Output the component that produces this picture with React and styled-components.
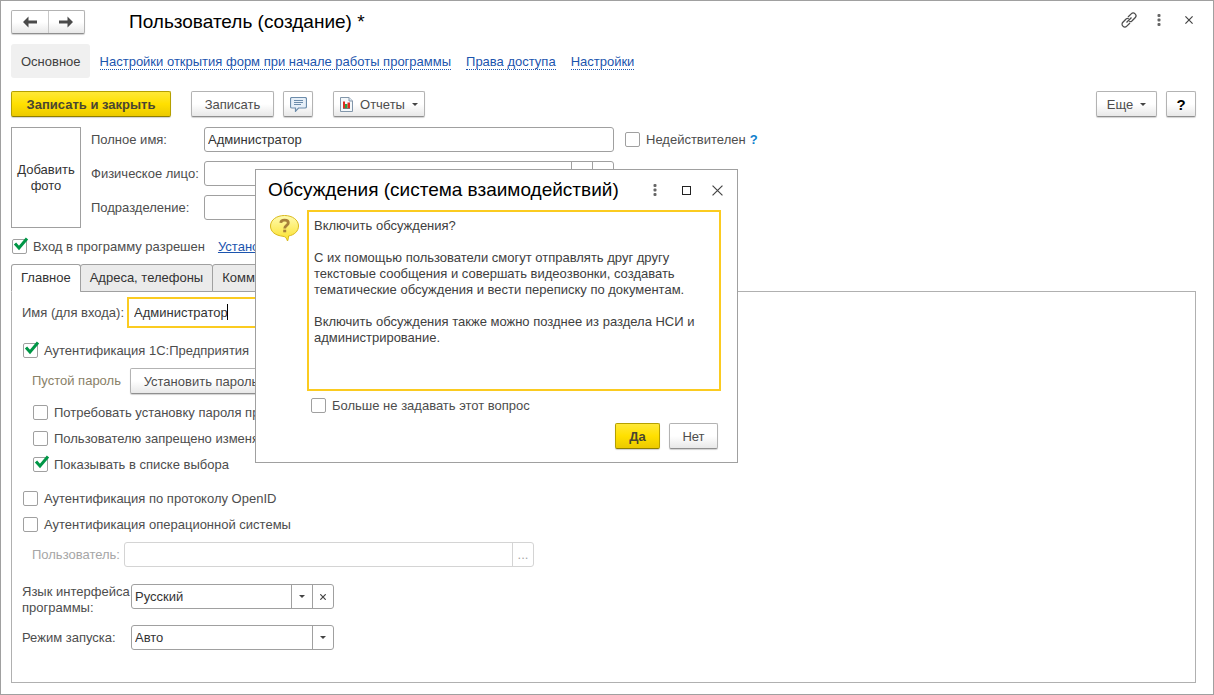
import React from "react";
import styled, { createGlobalStyle, css } from "styled-components";

const GlobalStyle = createGlobalStyle`
  *, *::before, *::after { box-sizing: border-box; }
  body {
    margin: 0;
    background: #fff;
    color: #4d4d4d;
    font: 13px/16px "Liberation Sans", Arial, sans-serif;
  }
  button, input, select, textarea { font: inherit; color: inherit; margin: 0; }
  svg { display: block; flex: none; }
`;

const Window = styled.main`
  position: relative;
  display: flex;
  flex-direction: column;
  min-height: 100vh;
  padding: 8px 17px 11px 10px;
  border: 1px solid #a0a0a0;
`;

const TitleBar = styled.header`
  display: flex;
  align-items: center;
  height: 25px;
`;

const buttonFace = css`
  border: 1px solid #b3b3b3;
  border-bottom-color: #8f8f8f;
  border-radius: 2px;
  background: linear-gradient(#fff 0%, #fff 50%, #e8e8e8 100%);
  box-shadow: 0 1px 1px rgba(0, 0, 0, 0.18);
`;

const HistoryButtons = styled.div`
  ${buttonFace}
  display: flex;
  width: 74px;
  height: 24px;
`;

const HistoryButton = styled.button`
  display: flex;
  flex: 1;
  align-items: center;
  justify-content: center;
  padding: 0;
  border: 0;
  background: none;
  & + & { border-left: 1px solid #c8c8c8; }
`;

const Title = styled.h1`
  flex: 1;
  margin: 0 0 0 44px;
  color: #000;
  font-size: 19px;
  line-height: 24px;
  font-weight: 400;
`;

const WindowTools = styled.div`
  display: flex;
  gap: ${(p) => p.$gap || 10}px;
`;

const ToolButton = styled.button`
  display: flex;
  align-items: center;
  justify-content: center;
  width: 20px;
  height: 20px;
  padding: 0;
  border: 0;
  background: none;
`;

const TitleTools = styled(WindowTools)`
  margin: 0 -3px 3px 0;
`;

const SectionNav = styled.nav`
  display: flex;
  align-items: center;
  gap: 15px;
  height: 34px;
  margin-top: 10px;
`;

const CurrentSection = styled.span`
  margin-right: -5px;
  padding: 10px 9px 8px 10px;
  border-radius: 3px;
  background: #f0f0f0;
  color: #404040;
`;

const SectionLink = styled.a`
  margin-top: 2px;
  border-bottom: 1px dotted #1c55ae;
  color: #1c55ae;
  line-height: 14px;
  text-decoration: none;
`;

const CommandBar = styled.div`
  display: flex;
  height: 27px;
  margin: 13px 0 9px;
  gap: 9px;
`;

const Button = styled.button`
  ${buttonFace}
  display: flex;
  align-items: center;
  justify-content: center;
  gap: 7px;
  width: ${(p) => p.$width}px;
  height: 26px;
  padding: 1px 0 0;
  white-space: nowrap;
  color: ${(p) => (p.$help ? "#000" : "#4d4d4d")};
  font-size: ${(p) => (p.$help ? 15 : 13)}px;
  font-weight: ${(p) => (p.$help ? 700 : 400)};
  ${(p) =>
    p.$primary &&
    css`
      border-color: #b5a000;
      border-bottom-color: #8f7f00;
      background: linear-gradient(#ffe838 0%, #ffe000 50%, #ecca00 100%);
      color: #4a4632;
      font-weight: 700;
    `}
`;

const Spread = styled.div`
  flex: ${(p) => (p.$grow ? 1 : "none")};
  width: ${(p) => (p.$grow ? "auto" : "2px")};
`;

const PersonBlock = styled.section`
  display: flex;
  gap: 10px;
`;

const PhotoButton = styled.button`
  width: 70px;
  height: 101px;
  padding: 0;
  border: 1px solid #a0a0a0;
  background: #fff;
  color: #333;
`;

const PersonFields = styled.div`
  display: flex;
  flex-direction: column;
  gap: 9px;
`;

const FieldRow = styled.div`
  display: flex;
  align-items: ${(p) => (p.$top ? "flex-start" : "center")};
  padding-left: ${(p) => (p.$indent ? 10 : 0)}px;
`;

const FieldLabel = styled.label`
  flex: none;
  width: ${(p) => p.$width}px;
  white-space: ${(p) => (p.$wrap ? "normal" : "nowrap")};
  color: ${(p) => (p.$muted ? "#a6a6a6" : "#4d4d4d")};
`;

const Field = styled.div`
  display: flex;
  width: ${(p) => p.$width}px;
  height: 25px;
  border: 1px solid ${(p) => (p.$muted ? "#d4d4d4" : "#a0a0a0")};
  border-radius: 3px;
  background: #fff;
`;

const inputFace = css`
  flex: 1;
  min-width: 0;
  padding: 0 3px;
  border: 0;
  outline: 0;
  background: none;
  color: #333;
  appearance: none;
`;

const Input = styled.input`
  ${inputFace}
`;

const Select = styled.select`
  ${inputFace}
`;

const FieldButton = styled.button`
  display: flex;
  align-items: center;
  justify-content: center;
  width: 21px;
  padding: 0;
  border: 0;
  border-left: 1px solid ${(p) => (p.$muted ? "#d4d4d4" : "#a0a0a0")};
  background: none;
  color: ${(p) => (p.$muted ? "#a6a6a6" : "#4d4d4d")};
`;

const FocusedField = styled.div`
  position: relative;
  display: flex;
  width: 210px;
  height: 31px;
  border: 2px solid #fbcb20;
  background: #fff;
  ${Input} { padding: 0 5px; }
`;

const TextCursor = styled.span`
  position: absolute;
  top: 5px;
  left: 98px;
  width: 1px;
  height: 16px;
  background: #000;
`;

const CheckLabel = styled.label`
  display: flex;
  align-items: center;
  gap: 6px;
  height: 16px;
  white-space: nowrap;
`;

const CheckBox = styled.span`
  position: relative;
  flex: none;
  width: 15px;
  height: 16px;
  input {
    display: block;
    width: 15px;
    height: 15px;
    margin: 0;
    border: 1px solid #a0a0a0;
    border-radius: 2px;
    background: #fff;
    appearance: none;
  }
  svg {
    position: absolute;
    top: -2px;
    left: 1px;
    pointer-events: none;
  }
`;

const Hint = styled.button`
  margin-left: 4px;
  padding: 0;
  border: 0;
  background: none;
  color: #0f80cc;
  font-weight: 700;
`;

const InvalidOption = styled.div`
  display: flex;
  align-items: center;
  height: 25px;
  margin-left: 1px;
`;

const AccessRow = styled.div`
  display: flex;
  align-items: center;
  gap: 13px;
  height: 16px;
  margin: 11px 0 9px 1px;
`;

const AccessLink = styled.a`
  color: #1c55ae;
`;

const Tabs = styled.div`
  display: flex;
  height: 28px;
  margin-bottom: -1px;
`;

const Tab = styled.button`
  position: relative;
  padding: 0 9px;
  border: 1px solid #a0a0a0;
  border-bottom-color: ${(p) => (p.$active ? "#fff" : "#a0a0a0")};
  border-radius: 3px 3px 0 0;
  background: ${(p) => (p.$active ? "#fff" : "#ebebeb")};
  color: #333;
  & + & { margin-left: -1px; }
`;

const TabPanel = styled.section`
  display: flex;
  flex: 1;
  flex-direction: column;
  align-items: flex-start;
  padding: 5px 10px 32px;
  border: 1px solid #b0b0b0;
`;

const Group = styled.div`
  display: flex;
  flex-direction: column;
  align-items: flex-start;
  gap: ${(p) => p.$gap || 10}px;
  margin-top: ${(p) => p.$top}px;
  padding-left: ${(p) => p.$left || 0}px;
`;

const Note = styled.span`
  width: 98px;
  color: #8a8168;
`;

const Dialog = styled.div`
  position: absolute;
  top: 168px;
  left: 254px;
  width: 483px;
  padding: 8px 16px 13px 12px;
  border: 1px solid #a0a0a0;
  background: #fff;
`;

const DialogHeader = styled.div`
  display: flex;
  align-items: center;
  height: 24px;
  margin-right: -6px;
`;

const DialogTitle = styled.h2`
  flex: 1;
  margin: 0;
  color: #000;
  font-size: 19px;
  line-height: 24px;
  font-weight: 400;
  white-space: nowrap;
`;

const DialogBody = styled.div`
  display: flex;
  align-items: flex-start;
  gap: 7px;
  margin-top: 8px;
`;

const QuestionIcon = styled.svg`
  margin-top: 4px;
`;

const Message = styled.div`
  flex: 1;
  height: 181px;
  padding: 6px 5px;
  border: 2px solid #fbcb20;
  color: #404040;
  p { margin: 0 0 16px; }
`;

const DialogOption = styled.div`
  margin: 7px 0 0 43px;
`;

const DialogActions = styled.div`
  display: flex;
  justify-content: flex-end;
  gap: 9px;
  margin: 9px 3px 0 0;
`;

function Arrow({ back }) {
  return (
    <svg width="16" height="12" viewBox="0 0 16 12">
      <path
        d={back ? "M1 6 6.5 .5V4.500H15V7.500H6.500V11.500Z" : "M15 6 9.500 .5V4.500H1V7.500H9.500V11.500Z"}
        fill="#4a4a4a"
      />
    </svg>
  );
}

const LinkIcon = () => (
  <svg width="16" height="16" viewBox="0 0 16 16" fill="none" stroke="#4d4d4d" strokeWidth="1.300">
    <path d="M7 5 10.200 1.900C11.300.8 13 .8 14.100 1.900S15.200 4.700 14.100 5.800L10.900 9" />
    <path d="M9 11 5.800 14.100C4.700 15.200 3 15.200 1.900 14.100S.8 11.300 1.900 10.200L5.100 7" />
    <path d="M5.500 10.500 10.500 5.500M5.100 7C6 6.200 7 6.200 7.700 6.700M10.900 9C10 9.800 9 9.800 8.300 9.300" />
  </svg>
);

const DotsIcon = () => (
  <svg width="4" height="12" viewBox="0 0 4 12" fill="#666">
    <rect x="0.500" y="0" width="3" height="3" rx="1" />
    <rect x="0.500" y="4.500" width="3" height="3" rx="1" />
    <rect x="0.500" y="9" width="3" height="3" rx="1" />
  </svg>
);

const CrossIcon = ({ size, width = 1.2 }) => (
  <svg width={size} height={size} viewBox="0 0 10 10" stroke="#444" strokeWidth={(width * 10) / size}>
    <path d="M.5.5 9.500 9.500M9.500.5.5 9.500" />
  </svg>
);

const MaximizeIcon = () => (
  <svg width="9" height="9" viewBox="0 0 9 9">
    <rect x=".5" y=".5" width="8" height="8" fill="none" stroke="#222" />
  </svg>
);

const CaretIcon = () => (
  <svg width="6" height="3" viewBox="0 0 6 3">
    <path d="M0 0H6L3 3Z" fill="#444" />
  </svg>
);

const CommentIcon = () => (
  <svg width="17" height="15" viewBox="0 0 17 15" fill="none" stroke="#6c8cab">
    <path
      d="M2 .5H15Q16.500.5 16.500 2V9.500Q16.500 11 15 11H8.500L5.500 14.300V11H2Q.5 11 .5 9.500V2Q.5.5 2 .5Z"
      fill="#e6eff8"
      strokeWidth="1.200"
    />
    <path d="M4 3.500H13M4 5.500H13M4 7.500H11" />
  </svg>
);

const ReportIcon = () => (
  <svg width="13" height="15" viewBox="0 0 13 15">
    <path d="M.5.5H9L12.500 4V14.500H.5Z" fill="#f4f8fb" stroke="#8296aa" />
    <path d="M9 .5V4H12.500" fill="#dfe7ef" stroke="#8296aa" />
    <path d="M3 4.500H5V11H3Z" fill="#e02b20" />
    <path d="M5 7H7.500V11H5Z" fill="#2aa044" />
    <path d="M7.500 5.500H10V11H7.500Z" fill="#e02b20" />
    <path d="M3 11.500H10" stroke="#777" />
  </svg>
);

const TickIcon = () => (
  <svg width="16" height="14" viewBox="0 0 16 14" fill="none" stroke="#009646" strokeWidth="3">
    <path d="M2 6.500 6 11 14 1.500" />
  </svg>
);

function Check({ label, checked }) {
  return (
    <CheckLabel>
      <CheckBox>
        <input type="checkbox" defaultChecked={checked} />
        {checked && <TickIcon />}
      </CheckBox>
      {label}
    </CheckLabel>
  );
}

function TextField({ id, label, labelWidth, width, value, buttons = 0 }) {
  return (
    <FieldRow>
      <FieldLabel htmlFor={id} $width={labelWidth}>{label}</FieldLabel>
      <Field $width={width}>
        <Input id={id} defaultValue={value} />
        {buttons > 0 && <FieldButton aria-label="Выбрать"><CaretIcon /></FieldButton>}
        {buttons > 1 && <FieldButton aria-label="Открыть"><MaximizeIcon /></FieldButton>}
      </Field>
    </FieldRow>
  );
}

function SelectField({ id, label, value, clearable, top }) {
  return (
    <FieldRow $top={top}>
      <FieldLabel htmlFor={id} $width={109} $wrap>{label}</FieldLabel>
      <Field $width={203}>
        <Select id={id} defaultValue={value}>
          <option>{value}</option>
        </Select>
        <FieldButton aria-label="Раскрыть список"><CaretIcon /></FieldButton>
        {clearable && <FieldButton aria-label="Очистить"><CrossIcon size={6} /></FieldButton>}
      </Field>
    </FieldRow>
  );
}

function DiscussionsDialog() {
  return (
    <Dialog role="dialog" aria-labelledby="dialog-title">
      <DialogHeader>
        <DialogTitle id="dialog-title">Обсуждения (система взаимодействий)</DialogTitle>
        <WindowTools $gap={11}>
          <ToolButton aria-label="Меню"><DotsIcon /></ToolButton>
          <ToolButton aria-label="Развернуть"><MaximizeIcon /></ToolButton>
          <ToolButton aria-label="Закрыть"><CrossIcon size={11} /></ToolButton>
        </WindowTools>
      </DialogHeader>
      <DialogBody>
        <QuestionIcon width="32" height="30" viewBox="0 0 32 30">
          <defs>
            <linearGradient id="bubble" x1="0" y1="0" x2="0" y2="1">
              <stop offset="0" stopColor="#fffbb0" />
              <stop offset="1" stopColor="#fbe02a" />
            </linearGradient>
          </defs>
          <path
            d="M16.500 1.500C8.500 1.500 2.500 6 2.500 12s5 9.500 12.500 10.300C17.500 22.600 18.500 24 19.500 27 20.500 25 20.500 23.500 20.500 22 26.500 21 30.500 17 30.500 12 30.500 6 24.500 1.500 16.500 1.500Z"
            fill="url(#bubble)"
            stroke="#d9b91c"
          />
          <path
            d="M12.800 8.800C13 5.300 20.300 5.300 20.300 8.900 20.300 11.500 16.700 11.300 16.700 14.500"
            fill="none"
            stroke="#a8813a"
            strokeWidth="2.800"
          />
          <rect x="15.200" y="15.700" width="3" height="2.600" fill="#a8813a" />
        </QuestionIcon>
        <Message>
          <p>Включить обсуждения?</p>
          <p>
            С их помощью пользователи смогут отправлять друг другу текстовые сообщения и
            совершать видеозвонки, создавать тематические обсуждения и вести переписку по
            документам.
          </p>
          <p>Включить обсуждения также можно позднее из раздела НСИ и администрирование.</p>
        </Message>
      </DialogBody>
      <DialogOption>
        <Check label="Больше не задавать этот вопрос" />
      </DialogOption>
      <DialogActions>
        <Button $primary $width={45}>Да</Button>
        <Button $width={49}>Нет</Button>
      </DialogActions>
    </Dialog>
  );
}

export default function App() {
  return (
    <>
      <GlobalStyle />
      <Window>
        <TitleBar>
          <HistoryButtons>
            <HistoryButton aria-label="Назад"><Arrow back /></HistoryButton>
            <HistoryButton aria-label="Вперед"><Arrow /></HistoryButton>
          </HistoryButtons>
          <Title>Пользователь (создание) *</Title>
          <TitleTools>
            <ToolButton aria-label="Получить ссылку"><LinkIcon /></ToolButton>
            <ToolButton aria-label="Меню"><DotsIcon /></ToolButton>
            <ToolButton aria-label="Закрыть"><CrossIcon size={8} /></ToolButton>
          </TitleTools>
        </TitleBar>

        <SectionNav>
          <CurrentSection>Основное</CurrentSection>
          <SectionLink href="#forms">Настройки открытия форм при начале работы программы</SectionLink>
          <SectionLink href="#rights">Права доступа</SectionLink>
          <SectionLink href="#settings">Настройки</SectionLink>
        </SectionNav>

        <CommandBar>
          <Button $primary $width={160}>Записать и закрыть</Button>
          <Spread />
          <Button $width={83}>Записать</Button>
          <Button $width={30} aria-label="Обсуждение"><CommentIcon /></Button>
          <Spread />
          <Button $width={92}>
            <ReportIcon />
            Отчеты
            <CaretIcon />
          </Button>
          <Spread $grow />
          <Button $width={61}>
            Еще
            <CaretIcon />
          </Button>
          <Button $width={30} $help>?</Button>
        </CommandBar>

        <PersonBlock>
          <PhotoButton>Добавить фото</PhotoButton>
          <PersonFields>
            <TextField id="full-name" label="Полное имя:" labelWidth={113} width={410} value="Администратор" />
            <TextField id="person" label="Физическое лицо:" labelWidth={113} width={410} buttons={2} />
            <TextField id="department" label="Подразделение:" labelWidth={113} width={410} buttons={2} />
          </PersonFields>
          <InvalidOption>
            <Check label="Недействителен" />
            <Hint aria-label="Справка">?</Hint>
          </InvalidOption>
        </PersonBlock>

        <AccessRow>
          <Check label="Вход в программу разрешен" checked />
          <AccessLink href="#restrictions">Установить ограничения</AccessLink>
        </AccessRow>

        <Tabs role="tablist">
          <Tab role="tab" aria-selected="true" $active>Главное</Tab>
          <Tab role="tab">Адреса, телефоны</Tab>
          <Tab role="tab">Комментарий</Tab>
        </Tabs>
        <TabPanel role="tabpanel">
          <FieldRow>
            <FieldLabel htmlFor="login" $width={105}>Имя (для входа):</FieldLabel>
            <FocusedField>
              <Input id="login" defaultValue="Администратор" />
              <TextCursor />
            </FocusedField>
          </FieldRow>

          <Group $top={15} $left={1}>
            <Check label="Аутентификация 1С:Предприятия" checked />
          </Group>
          <Group $top={9}>
            <FieldRow $indent>
              <Note>Пустой пароль</Note>
              <Button $width={142}>Установить пароль</Button>
            </FieldRow>
          </Group>
          <Group $top={11} $left={11}>
            <Check label="Потребовать установку пароля при входе" />
            <Check label="Пользователю запрещено изменять пароль" />
            <Check label="Показывать в списке выбора" checked />
          </Group>
          <Group $top={18} $left={1}>
            <Check label="Аутентификация по протоколу OpenID" />
            <Check label="Аутентификация операционной системы" />
          </Group>
          <Group $top={9}>
            <FieldRow $indent>
              <FieldLabel htmlFor="os-user" $width={92} $muted>Пользователь:</FieldLabel>
              <Field $width={410} $muted>
                <Input id="os-user" disabled />
                <FieldButton $muted disabled>...</FieldButton>
              </Field>
            </FieldRow>
          </Group>
          <Group $top={17} $gap={9}>
            <SelectField id="language" label="Язык интерфейса программы:" value="Русский" clearable top />
            <SelectField id="launch-mode" label="Режим запуска:" value="Авто" />
          </Group>
        </TabPanel>

        <DiscussionsDialog />
      </Window>
    </>
  );
}
